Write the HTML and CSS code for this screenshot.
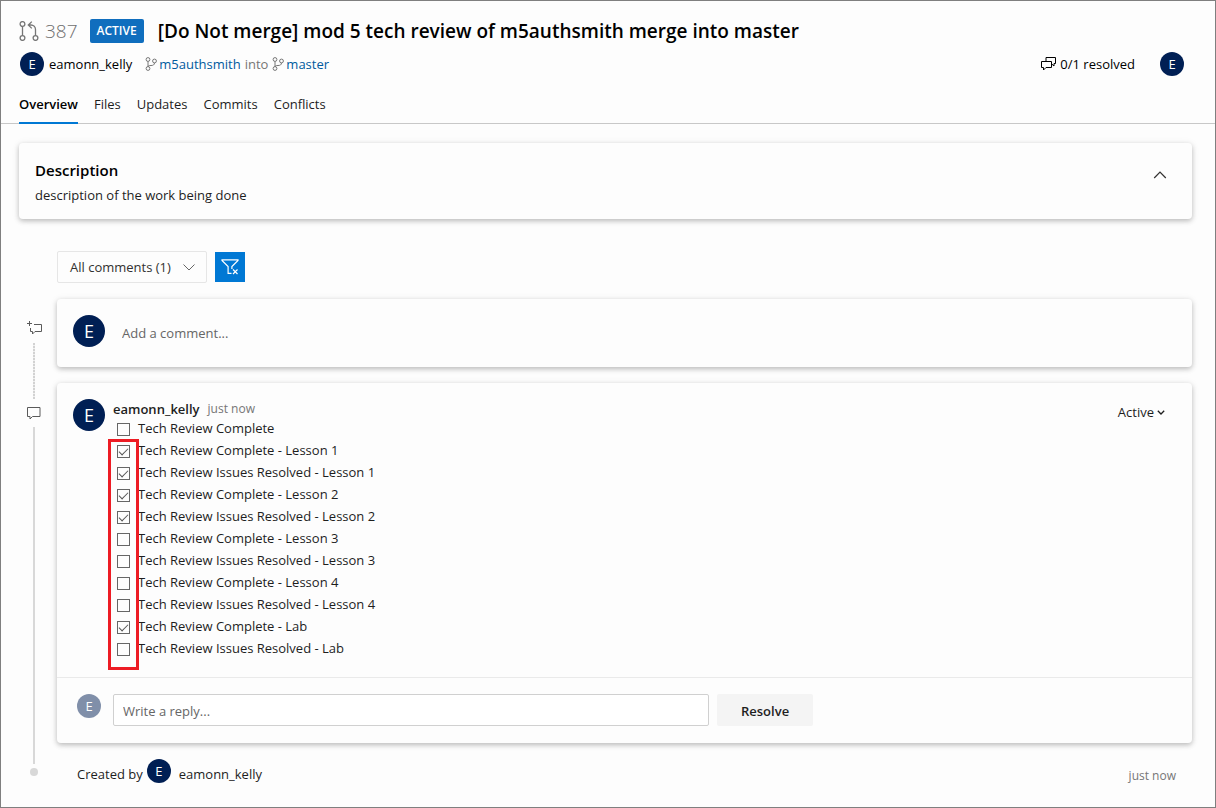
FILE: index.html
```html
<!DOCTYPE html>
<html lang="en">
<head>
<meta charset="utf-8">
<title>Pull request 387</title>
<link rel="stylesheet" href="styles.css">
</head>
<body>
<div class="page">
  <header class="header">
    <div class="title-row">
      <svg class="pr-icon" width="20" height="20" viewBox="0 0 20 20" fill="none" stroke="currentColor" stroke-width="1.3" aria-hidden="true"><circle cx="3.500" cy="3" r="2.400"/><circle cx="3.500" cy="17" r="2.400"/><circle cx="16.500" cy="17" r="2.400"/><path d="M3.500 5.400v9.200M16.500 14.600V8.500a4.500 4.500 0 0 0-4.500-4.500H9.500M12.800 .6L9.300 4L12.800 7.400"/></svg>
      <span class="pr-id">387</span>
      <span class="badge">ACTIVE</span>
      <h1 class="title">[Do Not merge] mod 5 tech review of m5authsmith merge into master</h1>
    </div>
    <div class="meta-row">
      <span class="avatar">E</span>
      <span class="author">eamonn_kelly</span>
      <span class="branches">
        <svg width="12" height="14" viewBox="0 0 12 14" fill="none" stroke="currentColor" aria-hidden="true"><circle cx="3" cy="2.500" r="1.900"/><circle cx="3" cy="11.500" r="1.900"/><circle cx="9.500" cy="4" r="1.900"/><path d="M3 4.400v5.200M9.500 5.900c0 2-1.500 2.600-3.500 2.600c-2 0-3 .3-3 1.500"/></svg>
        <a class="branch" href="#source">m5authsmith</a>
        <span class="into">into</span>
        <svg width="12" height="14" viewBox="0 0 12 14" fill="none" stroke="currentColor" aria-hidden="true"><circle cx="3" cy="2.500" r="1.900"/><circle cx="3" cy="11.500" r="1.900"/><circle cx="9.500" cy="4" r="1.900"/><path d="M3 4.400v5.200M9.500 5.900c0 2-1.500 2.600-3.500 2.600c-2 0-3 .3-3 1.500"/></svg>
        <a class="branch" href="#target">master</a>
      </span>
      <span class="resolved">
        <svg width="15" height="14" viewBox="0 0 15 14" fill="none" stroke="currentColor" aria-hidden="true"><path d="M.5 4.500h10v6H5L2.500 13v-2.500h-2zM5 4.500v-4h9.500v6h-1.500v2.500l-2.500-2.200"/></svg>
        0/1 resolved
      </span>
      <span class="avatar">E</span>
    </div>
    <nav class="tabs">
      <a class="tab tab-active" href="#overview">Overview</a>
      <a class="tab" href="#files">Files</a>
      <a class="tab" href="#updates">Updates</a>
      <a class="tab" href="#commits">Commits</a>
      <a class="tab" href="#conflicts">Conflicts</a>
    </nav>
  </header>

  <main class="main">
    <section class="card description">
      <div>
        <h2 class="description-title">Description</h2>
        <p class="description-text">description of the work being done</p>
      </div>
      <button class="icon-button" type="button" aria-label="Collapse description">
        <svg width="14" height="8" viewBox="0 0 14 8" fill="none" stroke="currentColor" stroke-width="1.200"><path d="M1.200 7L7 1.200L12.800 7"/></svg>
      </button>
    </section>

    <div class="filters">
      <button class="filter-select" type="button">All comments (1)
        <svg width="12" height="7" viewBox="0 0 12 7" fill="none" stroke="#666" aria-hidden="true"><path d="M.5.5L6 6L11.500.5"/></svg>
      </button>
      <button class="filter-clear" type="button" aria-label="Clear filter">
        <svg width="18" height="16" viewBox="0 0 18 16" fill="none" stroke="currentColor" stroke-width="1.200"><path d="M10.500 14.400H7.100V7.600L1 1.500V.8h16v.7l-6.100 6.100v2.500M12 10.500l4.500 4.500M16.500 10.500L12 15"/></svg>
      </button>
    </div>

    <div class="timeline">
      <div class="rail" aria-hidden="true">
        <svg class="rail-icon" width="15" height="14" viewBox="0 0 15 14" fill="none" stroke="currentColor"><path d="M2.500 0v5M0 2.500h5M7 3.500h7.500v7H8l-2.500 2.500v-2.500h-2V7"/></svg>
        <span class="rail-dotted"></span>
        <svg class="rail-icon" width="14" height="14" viewBox="0 0 14 14" fill="none" stroke="currentColor"><path d="M.5 1.500h12.500v9H5.500L3 13v-2.500H.5z"/></svg>
        <span class="rail-solid"></span>
        <span class="rail-dot"></span>
      </div>
      <div class="thread-list">
        <section class="card new-comment">
          <span class="avatar avatar-large">E</span>
          <input class="comment-input" type="text" placeholder="Add a comment..." aria-label="Add a comment">
        </section>

        <section class="card thread">
          <div class="comment">
            <span class="avatar avatar-large">E</span>
            <div class="comment-body">
              <div class="comment-head"><strong class="comment-author">eamonn_kelly</strong><span class="time">just now</span></div>
              <div class="tasks">
                <label class="task"><input type="checkbox">Tech Review Complete</label>
                <div class="task-group">
                  <label class="task"><input type="checkbox" checked>Tech Review Complete - Lesson 1</label>
                  <label class="task"><input type="checkbox" checked>Tech Review Issues Resolved - Lesson 1</label>
                  <label class="task"><input type="checkbox" checked>Tech Review Complete - Lesson 2</label>
                  <label class="task"><input type="checkbox" checked>Tech Review Issues Resolved - Lesson 2</label>
                  <label class="task"><input type="checkbox">Tech Review Complete - Lesson 3</label>
                  <label class="task"><input type="checkbox">Tech Review Issues Resolved - Lesson 3</label>
                  <label class="task"><input type="checkbox">Tech Review Complete - Lesson 4</label>
                  <label class="task"><input type="checkbox">Tech Review Issues Resolved - Lesson 4</label>
                  <label class="task"><input type="checkbox" checked>Tech Review Complete - Lab</label>
                  <label class="task"><input type="checkbox">Tech Review Issues Resolved - Lab</label>
                  <span class="highlight"></span>
                </div>
              </div>
            </div>
            <button class="status" type="button">Active
              <svg width="8" height="5" viewBox="0 0 8 5" fill="none" stroke="currentColor" stroke-width="1.300" aria-hidden="true"><path d="M.8.8L4 4L7.200.8"/></svg>
            </button>
          </div>
          <div class="reply">
            <span class="avatar avatar-muted">E</span>
            <input class="reply-input" type="text" placeholder="Write a reply..." aria-label="Write a reply">
            <button class="resolve" type="button">Resolve</button>
          </div>
        </section>

        <div class="created">
          <span class="created-text">Created by</span>
          <span class="avatar">E</span>
          <span class="created-text">eamonn_kelly</span>
          <span class="time created-time">just now</span>
        </div>
      </div>
    </div>
  </main>
</div>
</body>
</html>
```
FILE: styles.css
```css
* { box-sizing: border-box; }

body {
  margin: 0;
  background: #fdfdfd;
  color: #1e1e1e;
  font: 13px/20px "Open Sans", "Noto Sans", sans-serif;
}

h1, h2, p { margin: 0; }
a { text-decoration: none; }
svg { display: block; flex: none; }

button, input { font: inherit; color: inherit; margin: 0; }
button { border: 0; background: none; padding: 0; }

.page {
  min-height: 100vh;
  border: 1px solid #7f7f7f;
}

.avatar {
  display: flex;
  flex: none;
  align-items: center;
  justify-content: center;
  width: 24px;
  height: 24px;
  border-radius: 50%;
  background: #001f54;
  color: #fff;
  font-size: 13px;
}
.avatar-large { width: 32px; height: 32px; font-size: 18px; }
.avatar-muted { background: #808fa9; }

/* Header */
.header {
  padding: 16px 18px 0;
  border-bottom: 1px solid #c8c8c8;
}
.title-row { display: flex; align-items: center; height: 28px; }
.pr-icon { color: #767676; }
.pr-id { margin-left: 6px; color: #707070; font-size: 19px; font-weight: 300; }
.badge {
  margin: 0 14px 0 12px;
  padding: 0 7px;
  border-radius: 2px;
  background: #106ebe;
  color: #fff;
  font-size: 12px;
  font-weight: 600;
  line-height: 24px;
}
.title { color: #000; font-size: 19px; font-weight: 600; line-height: 28px; }

.meta-row {
  display: flex;
  align-items: center;
  padding: 7px 13px 0 1px;
  color: #000;
}
.author { margin-left: 5px; }
.branches { display: flex; align-items: center; gap: 2px; margin-left: 13px; color: #767676; }
.branch { color: #005a9e; }
.into { margin: 0 2px; }
.resolved { display: flex; align-items: center; gap: 4px; margin: 0 25px 0 auto; }

.tabs { display: flex; gap: 16px; margin: 18px 0 -1px; }
.tab { padding-bottom: 8px; color: #1e1e1e; border-bottom: 2px solid transparent; }
.tab-active { border-color: #0078d4; color: #000; font-weight: 600; }

/* Content */
.main { padding: 19px 23px 16px 18px; }

.card {
  border-radius: 4px;
  background: #fdfdfd;
  box-shadow: 0 2px 5px rgba(0, 0, 0, .22), 0 1px 8px rgba(0, 0, 0, .08);
}

.description {
  display: flex;
  align-items: flex-start;
  justify-content: space-between;
  padding: 15px 16px 14px;
}
.description-title { color: #000; font-size: 15px; font-weight: 600; line-height: 24px; }
.description-text { margin-top: 3px; line-height: 20px; }
.icon-button { margin-top: 4px; padding: 9px; color: #323130; }

.filters { display: flex; align-items: center; gap: 8px; margin: 32px 0 16px 38px; }
.filter-select {
  display: flex;
  align-items: center;
  gap: 12px;
  height: 32px;
  padding: 0 11px 0 12px;
  border: 1px solid #e6e6e6;
  border-radius: 2px;
  color: #323130;
}
.filter-clear {
  display: flex;
  align-items: center;
  justify-content: center;
  width: 30px;
  height: 30px;
  background: #0078d4;
  color: #fff;
}

.timeline { display: flex; }
.rail {
  display: flex;
  flex: none;
  flex-direction: column;
  align-items: center;
  width: 30px;
  margin-right: 8px;
  padding: 22px 0 10px;
}
.rail-icon { color: #5a5a5a; }
.rail-dotted {
  width: 2px;
  height: 56px;
  margin: 8px 0 7px;
  background: repeating-linear-gradient(#d2d2d2 0 2px, #f0f0f0 2px 3px);
}
.rail-solid { flex: 1; width: 2px; margin: 7px 0 4px; background: #d8d8d8; }
.rail-dot { width: 8px; height: 8px; border-radius: 50%; background: #d8d8d8; }

.thread-list { flex: 1; min-width: 0; }

.new-comment {
  display: flex;
  align-items: center;
  gap: 16px;
  height: 68px;
  margin-bottom: 16px;
  padding: 0 16px 4px;
}
.comment-input {
  flex: 1;
  height: 32px;
  padding: 4px 0 0 1px;
  border: 0;
  outline: 0;
  background: none;
}
input::placeholder { color: #666; opacity: 1; }

.comment { display: flex; gap: 8px; padding: 16px 16px 18px; }
.comment-body { flex: 1; }
.comment-head { display: flex; gap: 8px; line-height: 20px; }
.comment-author { font-weight: 600; }
.time { color: #767676; font-size: 12px; }
.tasks { margin-top: -2px; }
.task-group { position: relative; }
.task {
  display: flex;
  align-items: center;
  gap: 8px;
  height: 22px;
  padding-left: 4px;
}
.task input {
  appearance: none;
  width: 13px;
  height: 13px;
  margin-top: 3px;
  border: 1px solid #666;
  background: #fdfdfd;
}
.task input:checked::before {
  content: "";
  display: block;
  width: 8px;
  height: 4px;
  margin: 2px 0 0 1px;
  border: solid #555;
  border-width: 0 0 1px 1px;
  transform: rotate(-45deg);
}
.highlight {
  position: absolute;
  top: 0;
  left: -5px;
  width: 31px;
  height: 231px;
  border: 3px solid #ed1c24;
  pointer-events: none;
}
.status { display: flex; align-items: center; align-self: flex-start; gap: 3px; margin: 3px 11px 0 0; }

.reply {
  display: flex;
  gap: 8px;
  padding: 16px 16px 17px 20px;
  border-top: 1px solid #eaeaea;
}
.reply-input {
  flex: 0 1 596px;
  min-width: 0;
  height: 32px;
  margin-left: 4px;
  padding: 2px 9px 0;
  border: 1px solid #d0d0d0;
  border-radius: 2px;
  background: #fff;
}
.resolve {
  padding: 2px 24px 0;
  border-radius: 2px;
  background: #f4f4f4;
  font-weight: 600;
}

.created { display: flex; align-items: flex-start; margin-top: 16px; padding: 0 16px 0 20px; }
.created .avatar { margin: 0 8px 0 4px; }
.created-text { margin-top: 5px; }
.created-time { margin: 7px 0 0 auto; }
```
